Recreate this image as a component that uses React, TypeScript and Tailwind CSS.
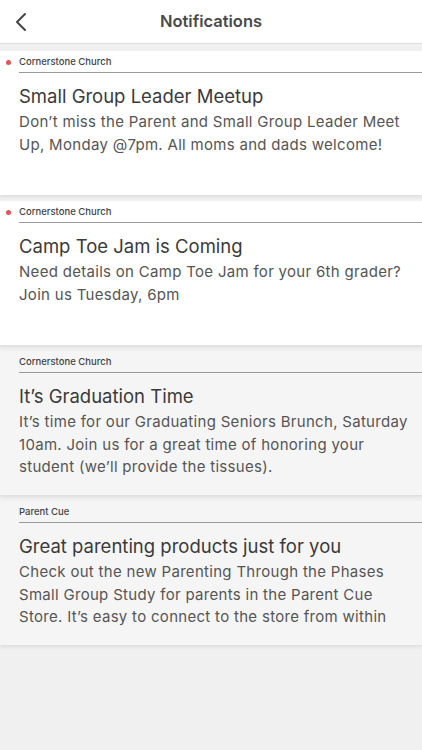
const notifications = [
  {
    source: "Cornerstone Church",
    title: "Small Group Leader Meetup",
    body: "Don’t miss the Parent and Small Group Leader Meet Up, Monday @7pm. All moms and dads welcome!",
    unread: true,
  },
  {
    source: "Cornerstone Church",
    title: "Camp Toe Jam is Coming",
    body: "Need details on Camp Toe Jam for your 6th grader? Join us Tuesday, 6pm",
    unread: true,
  },
  {
    source: "Cornerstone Church",
    title: "It’s Graduation Time",
    body: "It’s time for our Graduating Seniors Brunch, Saturday 10am. Join us for a great time of honoring your student (we’ll provide the tissues).",
    unread: false,
  },
  {
    source: "Parent Cue",
    title: "Great parenting products just for you",
    body: "Check out the new Parenting Through the Phases Small Group Study for parents in the Parent Cue Store. It’s easy to connect to the store from within the app.",
    unread: false,
  },
];

function Card({ n }: { n: (typeof notifications)[number] }) {
  return (
    <div
      className={
        "h-[144px] pt-[5px] shadow-[0_2px_3px_rgba(0,0,0,0.08)] " +
        (n.unread ? "bg-white" : "bg-[#f5f5f5]")
      }
    >
      <div className="flex items-center h-[12px]">
        <div className="w-[19px] flex justify-center">
          {n.unread && <span className="w-[5px] h-[5px] rounded-full bg-[#e05555] -ml-[3px]" />}
        </div>
        <span className="text-[9.5px] leading-[12px] font-medium text-[#444]">{n.source}</span>
      </div>
      <div className="ml-[19px] mt-[4px] border-b border-[#9a9a9a]" />
      <div className="pl-[19px] pr-[11px]">
        <h2 className="mt-[11px] text-[18.5px] leading-[24px] text-[#3a3a3a]">{n.title}</h2>
        <p className="mt-[3px] max-h-[72px] overflow-hidden text-[15px] leading-[22.5px] tracking-[0.3px] text-[#555]">
          {n.body}
        </p>
      </div>
    </div>
  );
}

export default function App() {
  return (
    <div className="min-h-[750px] bg-[#f0f0f0]" style={{ fontFamily: "Inter, 'Noto Sans', sans-serif" }}>
      <header className="relative h-[44px] bg-white border-b border-[#dcdcdc] flex items-center justify-center">
        <button className="absolute left-[13px] top-[11px] text-[#444]">
          <svg width="16" height="22" viewBox="0 0 16 22" fill="none" stroke="currentColor" strokeWidth="2" strokeLinecap="round" strokeLinejoin="round">
            <path d="M12 3 L4 11 L12 19" />
          </svg>
        </button>
        <h1 className="text-[16.5px] font-semibold text-[#4a4a4a]">Notifications</h1>
      </header>
      <div className="pt-[7px] flex flex-col gap-[6px]">
        {notifications.map((n, i) => (
          <Card key={i} n={n} />
        ))}
      </div>
    </div>
  );
}
